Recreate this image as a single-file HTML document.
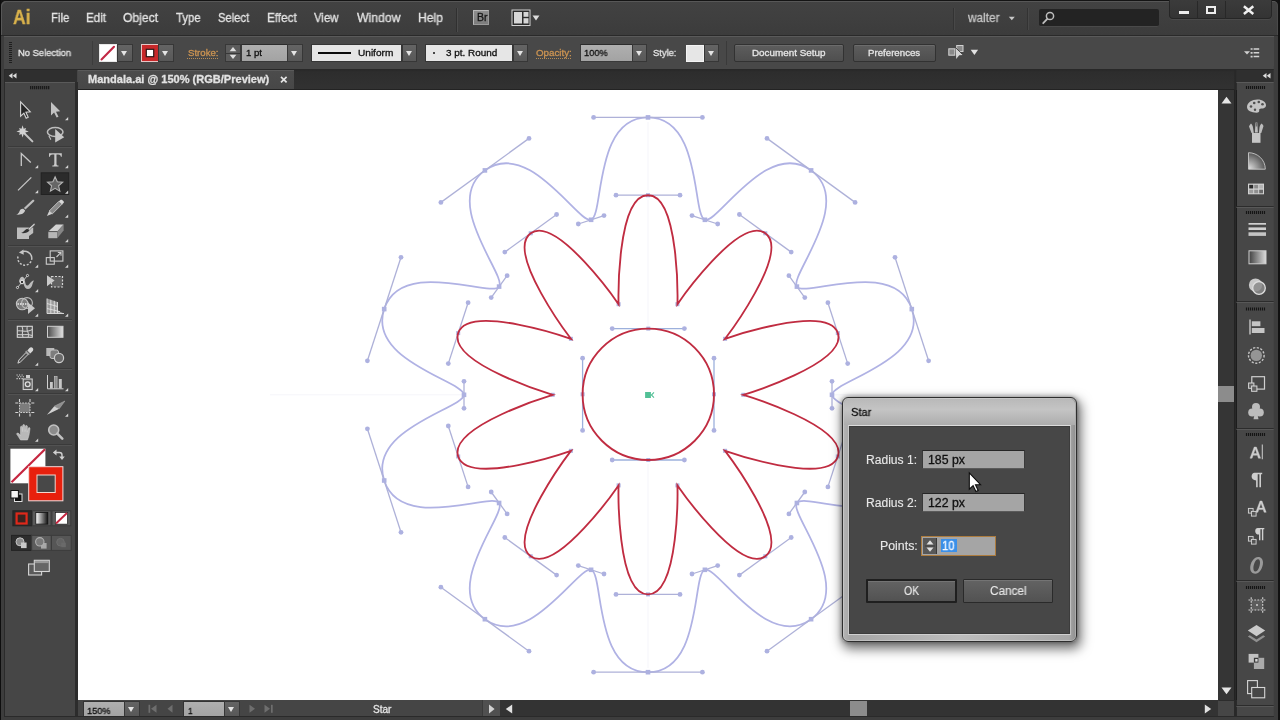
<!DOCTYPE html>
<html><head><meta charset="utf-8"><title>Illustrator</title>
<style>
*{box-sizing:border-box;margin:0;padding:0}
html,body{width:1280px;height:720px;overflow:hidden;background:#2b2b2b}
body{font-family:"Liberation Sans",sans-serif;font-size:12px;color:#e0e0e0}
#app{position:absolute;left:0;top:0;width:1280px;height:720px;overflow:hidden;background:#141414}
.abs{position:absolute}
#menubar{position:absolute;left:1px;top:1px;width:1277px;height:35px;background:linear-gradient(#424242,#3c3c3c);border-radius:5px 5px 0 0;box-shadow:inset 1px 1px 0 #575757,inset -1px 0 0 #4a4a4a;border-bottom:1px solid #2a2a2a}
#controlbar{position:absolute;left:2px;top:36px;width:1272px;height:32.5px;background:#484848;border-top:1px solid #5a5a5a}
#tabbar{position:absolute;left:2px;top:68.5px;width:1272px;height:21.5px;background:linear-gradient(#272727,#2d2d2d 15%,#323232)}
#tab{position:absolute;left:76px;top:1.5px;width:216px;height:19.5px;background:linear-gradient(#4c4c4c,#474747);box-shadow:inset 0 1px 0 #5a5a5a}
#tools{position:absolute;left:2px;top:70px;width:76px;height:647px;background:#464646}
#canvas{position:absolute;left:78px;top:90px;width:1140.3px;height:610px;background:#fff;overflow:hidden}
#status{position:absolute;left:78px;top:700px;width:1160px;height:17px;background:#2c2c2c}
#vscroll{position:absolute;left:1218.3px;top:90px;width:16px;height:610px;background:#353535}
#rpanel{position:absolute;left:1236.8px;top:70px;width:37.8px;height:647px;background:#474747}
</style>
<style>
.tx{position:absolute;white-space:pre;line-height:1;transform-origin:0 0;display:block;will-change:transform;-webkit-text-stroke:.3px}
</style>
<style>
.dd{position:absolute;background:linear-gradient(#646464,#585858);border:1px solid #373737}
.dd i{position:absolute;left:50%;top:50%;margin:-2.4px 0 0 -3.8px;width:0;height:0;border-left:3.8px solid transparent;border-right:3.8px solid transparent;border-top:5.2px solid #e4e4e4}
.fld{position:absolute;background:linear-gradient(#afafaf,#a3a3a3);border:1px solid #3a3a3a;border-top-color:#2c2c2c}
.lfld{position:absolute;background:#e6e6e6;border:1px solid #363636}
.btn{position:absolute;background:linear-gradient(#5d5d5d,#4f4f4f);border:1px solid #323232;border-radius:2px;box-shadow:inset 0 1px 0 #6c6c6c}
.dotu{height:1px;background:repeating-linear-gradient(90deg,#b88c54 0 1px,transparent 1px 2px)}
</style>
<style>
#dlg{position:absolute;left:842px;top:397px;width:235px;height:245px;border-radius:6px;border:1px solid #2e2e2e;background:linear-gradient(90deg,#b4b4b4,#a6a6a6 3%,#bdbdbd 50%,#a8a8a8 97%,#8e8e8e);box-shadow:0 0 0 1px rgba(255,255,255,.25) inset,2px 5px 12px 2px rgba(0,0,0,.55),0 0 5px rgba(0,0,0,.4)}
#dlgtitle{position:absolute;left:1px;top:1px;right:1px;height:26px;border-radius:5px 5px 0 0;background:linear-gradient(#b9b9b9,#c4c4c4 40%,#adadad)}
#dlgbody{position:absolute;left:5px;top:27px;width:223px;height:210px;background:#474747;border:1px solid #d4d4d4;border-color:#dcdcdc #c0c0c0 #d0d0d0 #c8c8c8;box-shadow:inset 0 0 0 1px #3c3c3c}
.dfld{position:absolute;background:#a5a5a5;border:1px solid #3a3a3a;border-top-color:#262626;border-bottom-color:#5a5a5a}
.dbtn{background:linear-gradient(#636363,#525252);box-shadow:inset 0 1px 0 #747474;border-radius:1px}
</style>

</head><body>
<div id="app">
<div id="canvas"><svg width="1280" height="720" viewBox="0 0 1280 720" style="position:absolute;left:-78px;top:-90px">
<path d="M270 394.800H464M832 394.800H1040M648 122V190M648 200V326M648 464V590M648 600V668" stroke="#f5f5fa" stroke-width="1"/>
<path d="M648.00 117.40 C702.40 117.40 692.02 215.63 704.86 219.81 C717.70 223.98 767.04 138.40 811.05 170.38 C855.06 202.35 788.92 275.73 796.86 286.65 C804.79 297.57 895.01 257.34 911.82 309.08 C928.63 360.82 832.00 381.30 832.00 394.80 C832.00 408.30 928.63 428.78 911.82 480.52 C895.01 532.26 804.79 492.03 796.86 502.95 C788.92 513.87 855.06 587.25 811.05 619.22 C767.04 651.20 717.70 565.62 704.86 569.79 C692.02 573.97 702.40 672.20 648.00 672.20 C593.60 672.20 603.98 573.97 591.14 569.79 C578.30 565.62 528.96 651.20 484.95 619.22 C440.94 587.25 507.08 513.87 499.14 502.95 C491.21 492.03 400.99 532.26 384.18 480.52 C367.37 428.78 464.00 408.30 464.00 394.80 C464.00 381.30 367.37 360.82 384.18 309.08 C400.99 257.34 491.21 297.57 499.14 286.65 C507.08 275.73 440.94 202.35 484.95 170.38 C528.96 138.40 578.30 223.98 591.14 219.81 C603.98 215.63 593.60 117.40 648.00 117.40 Z" fill="none" stroke="#b0b2e4" stroke-width="1.75"/>
<line x1="593.6" y1="117.4" x2="702.4" y2="117.4" stroke="#aeb1d8" stroke-width="1.3"/>
<circle cx="593.6" cy="117.4" r="2.4" fill="#adb1e0"/>
<circle cx="702.4" cy="117.4" r="2.4" fill="#adb1e0"/>
<rect x="645.7" y="115.1" width="4.6" height="4.6" fill="#adb1e0"/>
<line x1="692.0" y1="215.6" x2="717.7" y2="224.0" stroke="#aeb1d8" stroke-width="1.3"/>
<circle cx="692.0" cy="215.6" r="2.4" fill="#adb1e0"/>
<circle cx="717.7" cy="224.0" r="2.4" fill="#adb1e0"/>
<rect x="702.6" y="217.5" width="4.6" height="4.6" fill="#adb1e0"/>
<line x1="767.0" y1="138.4" x2="855.1" y2="202.4" stroke="#aeb1d8" stroke-width="1.3"/>
<circle cx="767.0" cy="138.4" r="2.4" fill="#adb1e0"/>
<circle cx="855.1" cy="202.4" r="2.4" fill="#adb1e0"/>
<rect x="808.8" y="168.1" width="4.6" height="4.6" fill="#adb1e0"/>
<line x1="788.9" y1="275.7" x2="804.8" y2="297.6" stroke="#aeb1d8" stroke-width="1.3"/>
<circle cx="788.9" cy="275.7" r="2.4" fill="#adb1e0"/>
<circle cx="804.8" cy="297.6" r="2.4" fill="#adb1e0"/>
<rect x="794.6" y="284.3" width="4.6" height="4.6" fill="#adb1e0"/>
<line x1="895.0" y1="257.3" x2="928.6" y2="360.8" stroke="#aeb1d8" stroke-width="1.3"/>
<circle cx="895.0" cy="257.3" r="2.4" fill="#adb1e0"/>
<circle cx="928.6" cy="360.8" r="2.4" fill="#adb1e0"/>
<rect x="909.5" y="306.8" width="4.6" height="4.6" fill="#adb1e0"/>
<line x1="832.0" y1="381.3" x2="832.0" y2="408.3" stroke="#aeb1d8" stroke-width="1.3"/>
<circle cx="832.0" cy="381.3" r="2.4" fill="#adb1e0"/>
<circle cx="832.0" cy="408.3" r="2.4" fill="#adb1e0"/>
<rect x="829.7" y="392.5" width="4.6" height="4.6" fill="#adb1e0"/>
<line x1="928.6" y1="428.8" x2="895.0" y2="532.3" stroke="#aeb1d8" stroke-width="1.3"/>
<circle cx="928.6" cy="428.8" r="2.4" fill="#adb1e0"/>
<circle cx="895.0" cy="532.3" r="2.4" fill="#adb1e0"/>
<rect x="909.5" y="478.2" width="4.6" height="4.6" fill="#adb1e0"/>
<line x1="804.8" y1="492.0" x2="788.9" y2="513.9" stroke="#aeb1d8" stroke-width="1.3"/>
<circle cx="804.8" cy="492.0" r="2.4" fill="#adb1e0"/>
<circle cx="788.9" cy="513.9" r="2.4" fill="#adb1e0"/>
<rect x="794.6" y="500.7" width="4.6" height="4.6" fill="#adb1e0"/>
<line x1="855.1" y1="587.2" x2="767.0" y2="651.2" stroke="#aeb1d8" stroke-width="1.3"/>
<circle cx="855.1" cy="587.2" r="2.4" fill="#adb1e0"/>
<circle cx="767.0" cy="651.2" r="2.4" fill="#adb1e0"/>
<rect x="808.8" y="616.9" width="4.6" height="4.6" fill="#adb1e0"/>
<line x1="717.7" y1="565.6" x2="692.0" y2="574.0" stroke="#aeb1d8" stroke-width="1.3"/>
<circle cx="717.7" cy="565.6" r="2.4" fill="#adb1e0"/>
<circle cx="692.0" cy="574.0" r="2.4" fill="#adb1e0"/>
<rect x="702.6" y="567.5" width="4.6" height="4.6" fill="#adb1e0"/>
<line x1="702.4" y1="672.2" x2="593.6" y2="672.2" stroke="#aeb1d8" stroke-width="1.3"/>
<circle cx="702.4" cy="672.2" r="2.4" fill="#adb1e0"/>
<circle cx="593.6" cy="672.2" r="2.4" fill="#adb1e0"/>
<rect x="645.7" y="669.9" width="4.6" height="4.6" fill="#adb1e0"/>
<line x1="604.0" y1="574.0" x2="578.3" y2="565.6" stroke="#aeb1d8" stroke-width="1.3"/>
<circle cx="604.0" cy="574.0" r="2.4" fill="#adb1e0"/>
<circle cx="578.3" cy="565.6" r="2.4" fill="#adb1e0"/>
<rect x="588.8" y="567.5" width="4.6" height="4.6" fill="#adb1e0"/>
<line x1="529.0" y1="651.2" x2="440.9" y2="587.2" stroke="#aeb1d8" stroke-width="1.3"/>
<circle cx="529.0" cy="651.2" r="2.4" fill="#adb1e0"/>
<circle cx="440.9" cy="587.2" r="2.4" fill="#adb1e0"/>
<rect x="482.6" y="616.9" width="4.6" height="4.6" fill="#adb1e0"/>
<line x1="507.1" y1="513.9" x2="491.2" y2="492.0" stroke="#aeb1d8" stroke-width="1.3"/>
<circle cx="507.1" cy="513.9" r="2.4" fill="#adb1e0"/>
<circle cx="491.2" cy="492.0" r="2.4" fill="#adb1e0"/>
<rect x="496.8" y="500.7" width="4.6" height="4.6" fill="#adb1e0"/>
<line x1="401.0" y1="532.3" x2="367.4" y2="428.8" stroke="#aeb1d8" stroke-width="1.3"/>
<circle cx="401.0" cy="532.3" r="2.4" fill="#adb1e0"/>
<circle cx="367.4" cy="428.8" r="2.4" fill="#adb1e0"/>
<rect x="381.9" y="478.2" width="4.6" height="4.6" fill="#adb1e0"/>
<line x1="464.0" y1="408.3" x2="464.0" y2="381.3" stroke="#aeb1d8" stroke-width="1.3"/>
<circle cx="464.0" cy="408.3" r="2.4" fill="#adb1e0"/>
<circle cx="464.0" cy="381.3" r="2.4" fill="#adb1e0"/>
<rect x="461.7" y="392.5" width="4.6" height="4.6" fill="#adb1e0"/>
<line x1="367.4" y1="360.8" x2="401.0" y2="257.3" stroke="#aeb1d8" stroke-width="1.3"/>
<circle cx="367.4" cy="360.8" r="2.4" fill="#adb1e0"/>
<circle cx="401.0" cy="257.3" r="2.4" fill="#adb1e0"/>
<rect x="381.9" y="306.8" width="4.6" height="4.6" fill="#adb1e0"/>
<line x1="491.2" y1="297.6" x2="507.1" y2="275.7" stroke="#aeb1d8" stroke-width="1.3"/>
<circle cx="491.2" cy="297.6" r="2.4" fill="#adb1e0"/>
<circle cx="507.1" cy="275.7" r="2.4" fill="#adb1e0"/>
<rect x="496.8" y="284.3" width="4.6" height="4.6" fill="#adb1e0"/>
<line x1="440.9" y1="202.4" x2="529.0" y2="138.4" stroke="#aeb1d8" stroke-width="1.3"/>
<circle cx="440.9" cy="202.4" r="2.4" fill="#adb1e0"/>
<circle cx="529.0" cy="138.4" r="2.4" fill="#adb1e0"/>
<rect x="482.6" y="168.1" width="4.6" height="4.6" fill="#adb1e0"/>
<line x1="578.3" y1="224.0" x2="604.0" y2="215.6" stroke="#aeb1d8" stroke-width="1.3"/>
<circle cx="578.3" cy="224.0" r="2.4" fill="#adb1e0"/>
<circle cx="604.0" cy="215.6" r="2.4" fill="#adb1e0"/>
<rect x="588.8" y="217.5" width="4.6" height="4.6" fill="#adb1e0"/>
<line x1="616.0" y1="195.2" x2="680.0" y2="195.2" stroke="#aeb1d8" stroke-width="1.3"/>
<circle cx="616.0" cy="195.2" r="2.4" fill="#adb1e0"/>
<circle cx="680.0" cy="195.2" r="2.4" fill="#adb1e0"/>
<rect x="646.0" y="193.2" width="4" height="4" fill="#adb1e0"/>
<rect x="675.4" y="302.2" width="4" height="4" fill="#adb1e0"/>
<line x1="739.4" y1="214.5" x2="791.2" y2="252.1" stroke="#aeb1d8" stroke-width="1.3"/>
<circle cx="739.4" cy="214.5" r="2.4" fill="#adb1e0"/>
<circle cx="791.2" cy="252.1" r="2.4" fill="#adb1e0"/>
<rect x="763.3" y="231.3" width="4" height="4" fill="#adb1e0"/>
<rect x="723.1" y="336.8" width="4" height="4" fill="#adb1e0"/>
<line x1="827.9" y1="302.7" x2="847.7" y2="363.6" stroke="#aeb1d8" stroke-width="1.3"/>
<circle cx="827.9" cy="302.7" r="2.4" fill="#adb1e0"/>
<circle cx="847.7" cy="363.6" r="2.4" fill="#adb1e0"/>
<rect x="835.8" y="331.1" width="4" height="4" fill="#adb1e0"/>
<rect x="741.3" y="392.8" width="4" height="4" fill="#adb1e0"/>
<line x1="847.7" y1="426.0" x2="827.9" y2="486.9" stroke="#aeb1d8" stroke-width="1.3"/>
<circle cx="847.7" cy="426.0" r="2.4" fill="#adb1e0"/>
<circle cx="827.9" cy="486.9" r="2.4" fill="#adb1e0"/>
<rect x="835.8" y="454.5" width="4" height="4" fill="#adb1e0"/>
<rect x="723.1" y="448.8" width="4" height="4" fill="#adb1e0"/>
<line x1="791.2" y1="537.5" x2="739.4" y2="575.1" stroke="#aeb1d8" stroke-width="1.3"/>
<circle cx="791.2" cy="537.5" r="2.4" fill="#adb1e0"/>
<circle cx="739.4" cy="575.1" r="2.4" fill="#adb1e0"/>
<rect x="763.3" y="554.3" width="4" height="4" fill="#adb1e0"/>
<rect x="675.4" y="483.4" width="4" height="4" fill="#adb1e0"/>
<line x1="680.0" y1="594.4" x2="616.0" y2="594.4" stroke="#aeb1d8" stroke-width="1.3"/>
<circle cx="680.0" cy="594.4" r="2.4" fill="#adb1e0"/>
<circle cx="616.0" cy="594.4" r="2.4" fill="#adb1e0"/>
<rect x="646.0" y="592.4" width="4" height="4" fill="#adb1e0"/>
<rect x="616.6" y="483.4" width="4" height="4" fill="#adb1e0"/>
<line x1="556.6" y1="575.1" x2="504.8" y2="537.5" stroke="#aeb1d8" stroke-width="1.3"/>
<circle cx="556.6" cy="575.1" r="2.4" fill="#adb1e0"/>
<circle cx="504.8" cy="537.5" r="2.4" fill="#adb1e0"/>
<rect x="528.7" y="554.3" width="4" height="4" fill="#adb1e0"/>
<rect x="568.9" y="448.8" width="4" height="4" fill="#adb1e0"/>
<line x1="468.1" y1="486.9" x2="448.3" y2="426.0" stroke="#aeb1d8" stroke-width="1.3"/>
<circle cx="468.1" cy="486.9" r="2.4" fill="#adb1e0"/>
<circle cx="448.3" cy="426.0" r="2.4" fill="#adb1e0"/>
<rect x="456.2" y="454.5" width="4" height="4" fill="#adb1e0"/>
<rect x="550.7" y="392.8" width="4" height="4" fill="#adb1e0"/>
<line x1="448.3" y1="363.6" x2="468.1" y2="302.7" stroke="#aeb1d8" stroke-width="1.3"/>
<circle cx="448.3" cy="363.6" r="2.4" fill="#adb1e0"/>
<circle cx="468.1" cy="302.7" r="2.4" fill="#adb1e0"/>
<rect x="456.2" y="331.1" width="4" height="4" fill="#adb1e0"/>
<rect x="568.9" y="336.8" width="4" height="4" fill="#adb1e0"/>
<line x1="504.8" y1="252.1" x2="556.6" y2="214.5" stroke="#aeb1d8" stroke-width="1.3"/>
<circle cx="504.8" cy="252.1" r="2.4" fill="#adb1e0"/>
<circle cx="556.6" cy="214.5" r="2.4" fill="#adb1e0"/>
<rect x="528.7" y="231.3" width="4" height="4" fill="#adb1e0"/>
<rect x="616.6" y="302.2" width="4" height="4" fill="#adb1e0"/>
<line x1="612.2" y1="328.6" x2="684.4" y2="328.6" stroke="#9cb0dc" stroke-width="1.3"/>
<circle cx="612.2" cy="328.6" r="2.4" fill="#adb1e0"/>
<circle cx="684.4" cy="328.6" r="2.4" fill="#adb1e0"/>
<rect x="646.3" y="326.6" width="4" height="4" fill="#adb1e0"/>
<line x1="612.2" y1="460.0" x2="684.4" y2="460.0" stroke="#9cb0dc" stroke-width="1.3"/>
<circle cx="612.2" cy="460.0" r="2.4" fill="#adb1e0"/>
<circle cx="684.4" cy="460.0" r="2.4" fill="#adb1e0"/>
<rect x="646.3" y="458.0" width="4" height="4" fill="#adb1e0"/>
<line x1="582.6" y1="358.2" x2="582.6" y2="430.4" stroke="#9cb0dc" stroke-width="1.3"/>
<circle cx="582.6" cy="358.2" r="2.4" fill="#adb1e0"/>
<circle cx="582.6" cy="430.4" r="2.4" fill="#adb1e0"/>
<rect x="580.6" y="392.3" width="4" height="4" fill="#adb1e0"/>
<line x1="714.0" y1="358.2" x2="714.0" y2="430.4" stroke="#9cb0dc" stroke-width="1.3"/>
<circle cx="714.0" cy="358.2" r="2.4" fill="#adb1e0"/>
<circle cx="714.0" cy="430.4" r="2.4" fill="#adb1e0"/>
<rect x="712.0" y="392.3" width="4" height="4" fill="#adb1e0"/>
<path d="M648.00 195.20 C680.00 195.20 677.45 304.16 677.45 304.16 C677.45 304.16 739.43 214.51 765.32 233.32 C791.21 252.13 725.10 338.78 725.10 338.78 C725.10 338.78 827.94 302.69 837.83 333.12 C847.72 363.55 743.30 394.80 743.30 394.80 C743.30 394.80 847.72 426.05 837.83 456.48 C827.94 486.91 725.10 450.82 725.10 450.82 C725.10 450.82 791.21 537.47 765.32 556.28 C739.43 575.09 677.45 485.44 677.45 485.44 C677.45 485.44 680.00 594.40 648.00 594.40 C616.00 594.40 618.55 485.44 618.55 485.44 C618.55 485.44 556.57 575.09 530.68 556.28 C504.79 537.47 570.90 450.82 570.90 450.82 C570.90 450.82 468.06 486.91 458.17 456.48 C448.28 426.05 552.70 394.80 552.70 394.80 C552.70 394.80 448.28 363.55 458.17 333.12 C468.06 302.69 570.90 338.78 570.90 338.78 C570.90 338.78 504.79 252.13 530.68 233.32 C556.57 214.51 618.55 304.16 618.55 304.16 C618.55 304.16 616.00 195.20 648.00 195.20 Z" fill="none" stroke="#c02c41" stroke-width="1.85" stroke-linejoin="miter"/>
<circle cx="648.3" cy="394.3" r="65.7" fill="none" stroke="#c02c41" stroke-width="1.85"/>
<rect x="645.100" y="392" width="5.800" height="6" fill="#52c096"/><path d="M654 392.300l-2.600 2.700 2.600 2.700" stroke="#52c096" stroke-width="1.100" fill="none"/>
</svg></div>
<div id="menubar">
  <div class="abs" style="left:455px;top:7px;width:1px;height:24px;background:#303030"></div>
  <div class="abs" style="left:456px;top:7px;width:1px;height:24px;background:#4c4c4c"></div>
  <!-- Br icon -->
  <div class="abs" style="left:471.500px;top:8.700px;width:16.500px;height:15.500px;background:linear-gradient(#8e8e8e,#7c7c7c);border:1px solid #b9b9b9;border-right-color:#9a9a9a;border-bottom-color:#9a9a9a"></div>
  <!-- layout icon -->
  <svg class="abs" style="left:510px;top:8px" width="32" height="18" viewBox="0 0 32 18">
    <rect x="1" y="1" width="18" height="15.5" fill="#2b2b2b" stroke="#d2d2d2" stroke-width="1"/>
    <rect x="3" y="3" width="8" height="11.5" fill="#d6d6d6"/>
    <rect x="12.5" y="3" width="5" height="4.8" fill="#d6d6d6"/>
    <rect x="12.5" y="9.2" width="5" height="5.3" fill="#d6d6d6"/>
    <path d="M21.5 6.5h7l-3.5 5z" fill="#dcdcdc"/>
  </svg>
  <!-- user sep -->
  <div class="abs" style="left:952px;top:7px;width:1px;height:22px;background:#333"></div>
  <div class="abs" style="left:953px;top:7px;width:1px;height:22px;background:#484848"></div>
  <div class="abs" style="left:1026px;top:7px;width:1px;height:22px;background:#333"></div>
  <div class="abs" style="left:1027px;top:7px;width:1px;height:22px;background:#484848"></div>
  <svg class="abs" style="left:1007px;top:15px" width="8" height="5"><path d="M0.8 0.8h6l-3 3.4z" fill="#c8c8c8"/></svg>
  <!-- search -->
  <div class="abs" style="left:1038px;top:8px;width:120px;height:18px;background:#232323;border-radius:2px;border-bottom:1px solid #4a4a4a"></div>
  <svg class="abs" style="left:1040px;top:9px" width="16" height="16" viewBox="0 0 16 16"><circle cx="9" cy="6" r="3.6" fill="none" stroke="#bdbdbd" stroke-width="1.5"/><path d="M6.3 8.8L2.2 13.2" stroke="#bdbdbd" stroke-width="1.8" stroke-linecap="round"/></svg>
  <!-- window buttons -->
  <div class="abs" style="left:1168.400px;top:-1px;width:102.200px;height:19px;background:linear-gradient(#3b3b3b,#343434);border:1px solid #262626;border-top:none;border-radius:0 0 4px 4px;box-shadow:0 1px 0 #4a4a4a"></div>
  <div class="abs" style="left:1196px;top:0;width:1px;height:17.500px;background:#282828"></div>
  <div class="abs" style="left:1223.500px;top:0;width:1px;height:17.500px;background:#282828"></div>
  <div class="abs" style="left:1177.700px;top:9.800px;width:10.300px;height:3.200px;background:#ededed"></div>
  <div class="abs" style="left:1204.700px;top:4.600px;width:10.500px;height:8.300px;border:2px solid #ededed"></div>
  <svg class="abs" style="left:1241px;top:4px" width="13" height="10" viewBox="0 0 13 10"><path d="M1.900 1.300L11.300 9M11.300 1.300L1.900 9" stroke="#f0f0f0" stroke-width="2.500"/></svg>
</div>

<div id="controlbar">
  <!-- gripper -->
  <div class="abs" style="left:7px;top:5px;width:3px;height:21px;background:repeating-linear-gradient(#1f1f1f 0 1px,transparent 1px 2px)"></div>
  <div class="abs" style="left:90px;top:4px;width:1px;height:24px;background:#3c3c3c"></div>
  <!-- fill swatch -->
  <svg class="abs" style="left:97px;top:7px" width="18" height="18" viewBox="0 0 18 18"><rect x="0.5" y="0.5" width="17" height="17" fill="#fff" stroke="#e8e8e8"/><path d="M2.5 15.5L15 2.8" stroke="#c22845" stroke-width="2.1" stroke-linecap="round"/></svg>
  <div class="dd" style="left:115px;top:7px;width:16px;height:18px"><i></i></div>
  <!-- stroke swatch -->
  <svg class="abs" style="left:138.5px;top:6.5px" width="18" height="18" viewBox="0 0 18 18"><rect x="0.5" y="0.5" width="17" height="17" fill="#c8282a" stroke="#e6c6c6"/><rect x="5.3" y="5.3" width="7.4" height="7.4" fill="#fff" stroke="#2a1a1a" stroke-width="1.2"/></svg>
  <div class="dd" style="left:156px;top:7px;width:16px;height:18px"><i></i></div>
  <!-- stroke underline -->
  <div class="abs dotu" style="left:185px;top:21px;width:31px"></div>
  <!-- spinner -->
  <div class="abs" style="left:223px;top:7px;width:16px;height:18px;background:#5c5c5c;border:1px solid #383838"></div>
  <div class="abs" style="left:224px;top:15.5px;width:14px;height:1px;background:#383838"></div>
  <svg class="abs" style="left:226px;top:9px" width="10" height="14" viewBox="0 0 10 14"><path d="M1.6 5.2h6.8L5 1z" fill="#dedede"/><path d="M1.6 8.8h6.8L5 13z" fill="#dedede"/></svg>
  <div class="fld" style="left:238.7px;top:7px;width:47px;height:18px"></div>
  <div class="dd" style="left:285px;top:7px;width:16px;height:18px"><i></i></div>
  <!-- uniform -->
  <div class="lfld" style="left:309px;top:7px;width:91px;height:18px"></div>
  <div class="abs" style="left:315.5px;top:15px;width:33px;height:1.6px;background:#0c0c0c"></div>
  <div class="dd" style="left:400px;top:7px;width:15px;height:18px"><i></i></div>
  <!-- 3pt round -->
  <div class="lfld" style="left:423px;top:7px;width:88px;height:18px"></div>
  <div class="abs" style="left:430.5px;top:14.7px;width:2.6px;height:2.6px;border-radius:2px;background:#111"></div>
  <div class="dd" style="left:511px;top:7px;width:15px;height:18px"><i></i></div>
  <div class="abs dotu" style="left:534px;top:21px;width:36px"></div>
  <!-- opacity -->
  <div class="fld" style="left:577.5px;top:7px;width:53px;height:18px"></div>
  <div class="dd" style="left:630px;top:7px;width:15px;height:18px"><i></i></div>
  <!-- style -->
  <div class="abs" style="left:684px;top:7.5px;width:18px;height:17px;background:#e6e6e6;border:1px solid #f4f4f4"></div>
  <div class="dd" style="left:702px;top:7px;width:15px;height:18px"><i></i></div>
  <div class="abs" style="left:724px;top:4px;width:1px;height:24px;background:#3a3a3a"></div>
  <div class="btn" style="left:732px;top:7px;width:110px;height:18px"></div>
  <div class="btn" style="left:851px;top:7px;width:83px;height:18px"></div>
  <!-- select similar icon -->
  <svg class="abs" style="left:944px;top:6px" width="36" height="22" viewBox="946 43 36 22">
    <rect x="948.800" y="48.800" width="6" height="6.400" fill="#8a8a8a" stroke="#d2d2d2" stroke-width="1"/>
    <rect x="956.700" y="45.500" width="6.300" height="6" fill="#8a8a8a" stroke="#d2d2d2" stroke-width="1"/>
    <path d="M955.700 47.800L963 55.100 959.200 55.300 956.200 59z" fill="#d4d4d4"/>
    <path d="M955.700 47.800L962.800 54.600" stroke="#2a2a2a" stroke-width=".8"/>
    <path d="M970.700 49.700h7.400L974.400 54.900z" fill="#e2e2e2"/>
  </svg>
  <!-- panel menu -->
  <svg class="abs" style="left:1241px;top:10px" width="18" height="12" viewBox="0 0 18 12">
    <path d="M1 4.2h6L4 7.6z" fill="#d2d2d2"/>
    <path d="M7.6 2h2M7.6 5.8h2M7.6 9.6h2" stroke="#d2d2d2" stroke-width="1.7"/>
    <path d="M10.6 2h5.6M10.6 5.8h5.6M10.6 9.6h5.6" stroke="#d2d2d2" stroke-width="1.5"/>
  </svg>
</div>

<div id="tabbar"><div id="tab"></div>
<div class="abs" style="left:76px;top:20.7px;width:1157px;height:.8px;background:#232323"></div>
<svg class="abs" style="left:277px;top:6px" width="10" height="10" viewBox="0 0 10 10"><path d="M2 1.900l5.600 5.400M7.600 1.900l-5.600 5.400" stroke="#e4e4e4" stroke-width="1.700"/></svg>
</div>

<div id="tools"></div>
<svg id="toolsvg" class="abs" style="left:0;top:66px" width="80" height="654" viewBox="0 66 80 654">
<defs>
<linearGradient id="gh" x1="0" x2="1" y1="0" y2="0"><stop offset="0" stop-color="#4a4a4a"/><stop offset="1" stop-color="#e2e2e2"/></linearGradient>
<linearGradient id="gh2" x1="0" x2="1" y1="0" y2="0"><stop offset="0" stop-color="#fff"/><stop offset="1" stop-color="#111"/></linearGradient>
<path id="tri" d="M0 3.2L3.2 0V3.2z" fill="#d4d4d4"/>
</defs>
<!-- header -->
<rect x="4.4" y="70" width="72.6" height="12" fill="#2f2f2f"/>
<rect x="4.4" y="82" width="72.6" height="1" fill="#5a5a5a"/>
<path d="M12.5 73v5.400L8.700 75.700zM16.500 73v5.400L12.700 75.700z" fill="#dcdcdc"/>
<!-- gripper -->
<path d="M30.7 86v3.2M32.7 86v3.2M34.7 86v3.2M36.7 86v3.2M38.7 86v3.2M40.7 86v3.2M42.7 86v3.2M44.7 86v3.2M46.7 86v3.2M48.7 86v3.2" stroke="#151515" stroke-width="1.150"/>
<!-- separators -->
<g stroke="#3a3a3a" stroke-width="1"><path d="M8 146.5h64M8 245.5h64M8 319.5h64M8 368.5h64M8 393.5h64M8 444.5h64"/></g>
<g stroke="#525252" stroke-width="1"><path d="M8 147.5h64M8 246.5h64M8 320.5h64M8 369.5h64M8 394.5h64M8 445.5h64"/></g>

<!-- row1: selection tools -->
<path d="M20.600 101.800v14.400l3.300-3 2.300 5 2-.9-2.300-5 4.400-.400z" fill="#262626" stroke="#d4d4d4" stroke-width="1.100" stroke-linejoin="miter"/>
<path d="M51 101.900v13.500l3.100-2.800 2.500 5 1.900-.9-2.500-5 4.200-.500z" fill="#c2c2c2"/>
<use href="#tri" x="65" y="117"/>
<!-- row2: magic wand, lasso -->
<path d="M25 134l7.400 7.400" stroke="#c4c4c4" stroke-width="2" stroke-linecap="round"/>
<path d="M22.6 125.2L23.7 128.7L26.1 127.9L25.3 130.3L28.8 131.4L25.3 132.5L26.1 134.9L23.7 134.1L22.6 137.6L21.5 134.1L19.1 134.9L19.9 132.5L16.4 131.4L19.9 130.3L19.1 127.9L21.5 128.7z" fill="#d2d2d2"/>
<ellipse cx="55.200" cy="132" rx="7.800" ry="4.500" fill="none" stroke="#bdbdbd" stroke-width="1.500"/>
<path d="M49.500 135.500c-1.600 1.800 1.800 2.200 1 4.200" fill="none" stroke="#bdbdbd" stroke-width="1.300"/>
<path d="M55.200 129v13.400l9-5.200z" fill="#c8c8c8"/>
<!-- row3: anchor, type -->
<path d="M21.3 166V153.500l9.500 9" fill="none" stroke="#c8c8c8" stroke-width="1.3"/>
<use href="#tri" x="35" y="165"/>
<path d="M49 153.200h12.800v3.600h-.9c-.3-1.600-1-2.300-2.700-2.300h-1.700v9.200c0 1.400.5 1.700 2 1.800v.9h-6.200v-.9c1.500-.1 2-.4 2-1.800v-9.200h-1.700c-1.700 0-2.400.7-2.700 2.300H49z" fill="#cacaca"/>
<use href="#tri" x="65" y="165"/>
<!-- row4: line, star(selected) -->
<path d="M18 190.400L31.300 177.400" stroke="#c8c8c8" stroke-width="1.3"/>
<use href="#tri" x="35" y="190"/>
<rect x="41.200" y="172.800" width="27.500" height="21.700" fill="#2b2b2b" stroke="#222" stroke-width="1"/>
<path d="M55.100 176.800l2.200 4.900 5.400.5-4.100 3.600 1.200 5.300-4.700-2.800-4.700 2.800 1.200-5.300-4.100-3.600 5.400-.5z" fill="#666" stroke="#b4b4b4" stroke-width="1.1" stroke-linejoin="miter"/>
<use href="#tri" x="65" y="190.600"/>
<!-- row5: brush, pencil -->
<path d="M33.800 199.800c.8.500.7 1.200.2 1.800l-8.500 8-1.600-1.600 8.500-8c.4-.4 1-.5 1.400-.2z" fill="#bdbdbd"/>
<path d="M23.300 208.700l1.800 1.800c-.5 2.500-4 4.800-9 4 2.500-.8 2.800-2 3.500-3.600.7-1.500 2-2.400 3.700-2.200z" fill="#cdcdcd"/>
<path d="M59 201.200l3.200 2.800-9.800 9.800-3.200-2.800z" fill="#8a8a8a" stroke="#c8c8c8" stroke-width=".9"/>
<path d="M59 201.200l1.300-1.200c.6-.5 1.300-.5 1.900 0l1.300 1.200c.5.500.5 1.300 0 1.800l-1.300 1.200z" fill="#d8d8d8"/>
<path d="M49.200 211l3.200 2.800-5.500 2.300z" fill="#d0d0d0"/>
<use href="#tri" x="65" y="214.500"/>
<!-- row6: blob brush, eraser -->
<path d="M17 227.500h16.200v5.500l-4.200 3v3H17z" fill="#bdbdbd"/>
<path d="M34.800 223.600c.5.400.4 1 0 1.400l-5.600 5.200-1.300-1.300 5.700-5.200c.4-.3.800-.4 1.200-.1z" fill="#d2d2d2" stroke="#3a3a3a" stroke-width=".5"/>
<path d="M27.700 229l1.500 1.400c-1 2-4.500 3.200-8.200 2.600 2-.7 2.800-1.300 3.600-2.400.8-1.100 1.800-1.700 3.100-1.600z" fill="#333"/>
<path d="M55.900 224.600h7.700l-6.300 6.900h-9z" fill="#d2d2d2"/>
<path d="M48.300 231.800h9v6.400h-9z" fill="#b6b6b6"/>
<path d="M57.300 231.500l6.300-6.900v5.900l-6.300 7.700z" fill="#868686"/>
<path d="M48.300 231.600h9" stroke="#3c3c3c" stroke-width=".7"/>
<use href="#tri" x="65" y="239"/>
<!-- row7: rotate, scale -->
<path d="M21.500 252.200a7 7 0 0 1 10.300 5.700" fill="none" stroke="#c6c6c6" stroke-width="1.500"/>
<path d="M31.800 257.900a7 7 0 1 1-13.300-2.800" fill="none" stroke="#c6c6c6" stroke-width="1.500" stroke-dasharray="2 1.600"/>
<path d="M23.500 249.600l-4.600 2.800 4.800 2.300z" fill="#c6c6c6"/>
<use href="#tri" x="35" y="264.500"/>
<rect x="46.300" y="257.600" width="8" height="6.600" fill="none" stroke="#cdcdcd" stroke-width="1.100"/>
<rect x="50.200" y="250.900" width="12.700" height="10.200" fill="none" stroke="#cdcdcd" stroke-width="1.100"/>
<path d="M56.500 257l4.300-4.300M57.800 252.500h3.200v3.200" fill="none" stroke="#cdcdcd" stroke-width="1.100"/>
<use href="#tri" x="65" y="264.500"/>
<!-- row8: width, free transform -->
<path d="M19 281c1-4 3.500-5.500 5-3s1 8 3.500 7.500 2.500-4.500 6.500-5c-2 3-1.500 8.500-6 8.500-4.500 0-3.500-6-5.500-6s-2 1.500-3.500-2z" fill="#bcbcbc"/>
<path d="M17.500 287.500l10-12" stroke="#e0e0e0" stroke-width=".8"/>
<circle cx="22" cy="282" r="1.800" fill="#3a3a3a" stroke="#ececec" stroke-width="1"/>
<circle cx="17.500" cy="287.500" r="1.100" fill="#3a3a3a" stroke="#ececec" stroke-width=".8"/>
<circle cx="27.500" cy="275.500" r="1.100" fill="#3a3a3a" stroke="#ececec" stroke-width=".8"/>
<use href="#tri" x="35" y="289"/>
<rect x="51.500" y="276.500" width="11" height="10.500" fill="#606060" stroke="#d6d6d6" stroke-width="1.200" stroke-dasharray="2 1.500"/>
<path d="M47 275.200v11l7.600-5.600z" fill="#cacaca"/>
<!-- row9: shape builder, perspective grid -->
<circle cx="22.200" cy="304" r="5.800" fill="#7e7e7e" stroke="#c4c4c4" stroke-width="1.100"/>
<circle cx="27" cy="303" r="5.400" fill="none" stroke="#bdbdbd" stroke-width="1.100"/>
<path d="M17.500 304h11" stroke="#f0f0f0" stroke-width="1.400" stroke-dasharray="1.400 1.100"/>
<path d="M28 302.500v11.500l7-5.800z" fill="#c8c8c8"/>
<use href="#tri" x="35" y="313.500"/>
<path d="M47 298.500v15h17l-6.500-3v-8.500z" fill="#9a9a9a"/>
<path d="M47 298.500v15M50.800 299.800v13.700M54.300 300.800v12.700M57.500 302v11.500M47 313.500h17M47 308.500l13 3.200M47 303.500l10.500 3" stroke="#e0e0e0" stroke-width=".9" fill="none"/>
<use href="#tri" x="65" y="313.500"/>
<!-- row10: mesh, gradient -->
<rect x="17.300" y="326.300" width="15" height="11" fill="#555" stroke="#d6d6d6" stroke-width="1.100"/>
<path d="M17.300 331c4-1 9 2 15-1.500M22 326.300c2 4-1 7 1 11M27.500 326.300c-2 4 2.500 7 .5 11M17.300 334.500c5 1 10-1 15 1" fill="none" stroke="#d6d6d6" stroke-width="1"/>
<rect x="47.500" y="326.300" width="15.500" height="11" fill="url(#gh)" stroke="#cfcfcf" stroke-width="1"/>
<!-- row11: eyedropper, blend -->
<path d="M29.500 348c1-1 2.500-.8 3.200 0 .8.800.8 2.200-.2 3.200l-2.200 2.200-3-3z" fill="#d8d8d8"/>
<path d="M26.300 350.500l3.600 3.600-1.200 1.200-3.600-3.600z" fill="#9a9a9a"/>
<path d="M26 352.500l2 2-7.300 7.300-2.800 1.400 1-3.200z" fill="#505050" stroke="#d0d0d0" stroke-width="1"/>
<use href="#tri" x="35" y="362.500"/>
<rect x="46.300" y="348" width="8" height="8" fill="#b9b9b9"/>
<rect x="50" y="350" width="8.500" height="8.500" rx="2" fill="#7d7d7d" stroke="#c2c2c2" stroke-width="1"/>
<circle cx="59" cy="358" r="4.600" fill="#6a6a6a" stroke="#cdcdcd" stroke-width="1.200"/>
<!-- row12: symbol sprayer, graph -->
<rect x="23.200" y="379" width="9" height="10.500" fill="#585858" stroke="#cfcfcf" stroke-width="1.100"/>
<rect x="26" y="375" width="4" height="3" fill="#cfcfcf"/>
<circle cx="27.700" cy="384.300" r="2.400" fill="none" stroke="#dedede" stroke-width="1.300"/>
<path d="M16.500 375h1.200M19 375h1.200M21.500 375h1.200M17.700 376.800h1.200M20.200 376.800h1.200M22.700 376.800h1.200M16.500 378.600h1.200M19 378.600h1.200M21.500 378.600h1.200" stroke="#d4d4d4" stroke-width="1.100"/>
<use href="#tri" x="35" y="388"/>
<path d="M47.500 375v13.800h16" fill="none" stroke="#d0d0d0" stroke-width="1"/>
<rect x="50" y="382" width="2.800" height="6.500" fill="#c8c8c8"/>
<rect x="54.300" y="376.500" width="2.800" height="12" fill="#8c8c8c" stroke="#c8c8c8" stroke-width=".6"/>
<rect x="58.800" y="379" width="3" height="9.500" fill="#c8c8c8"/>
<use href="#tri" x="65" y="388"/>
<!-- row13: artboard, slice -->
<rect x="19.500" y="403" width="10.500" height="9.500" fill="#7c7c7c" stroke="#d0d0d0" stroke-width="1" stroke-dasharray="1.600 1.200"/>
<path d="M19.500 399v3M30 399v3M19.500 413.500v3M30 413.500v3M15.300 403h3M15.300 412.500h3M31.300 403h3M31.300 412.500h3" stroke="#d6d6d6" stroke-width="1.100"/>
<path d="M47 414.800L54.300 406.200 59.200 408.800z" fill="#d2d2d2"/>
<path d="M54.300 406.200L64.900 401 59.200 408.800z" fill="#8e8e8e" stroke="#b4b4b4" stroke-width=".5"/>
<use href="#tri" x="65" y="413.500"/>
<!-- row14: hand, zoom -->
<path d="M20.500 440c-1.500-2.500-3-4.500-4-6.200.8-1.200 2.200-.8 3.300.8l.7 1v-8.500c0-1.200 1.800-1.200 1.900 0l.3 4.500v-6c0-1.300 2-1.300 2.100 0l.1 6 .5-5.200c.1-1.200 2-1.100 2 .1l-.2 5.600 1-3.800c.3-1.100 2-.8 1.800.4-.5 3.500-.7 6-1.500 8.300-.3 1-.7 2-1 3z" fill="#b8b8b8" stroke="#d6d6d6" stroke-width=".5"/>
<use href="#tri" x="35" y="438.500"/>
<circle cx="53.700" cy="430" r="5" fill="#8c8c8c" stroke="#c2c2c2" stroke-width="1.600"/>
<path d="M57.300 433.700l5 5" stroke="#c2c2c2" stroke-width="2.600" stroke-linecap="round"/>

<!-- fill/stroke swatches -->
<rect x="10.400" y="448.700" width="35" height="34.600" fill="#fff"/>
<path d="M11.500 482.300L45 449.200" stroke="#c62640" stroke-width="2.200"/>
<path d="M55 452.500h4.500c1.500 0 2.500 1 2.500 2.500v3" fill="none" stroke="#d0d0d0" stroke-width="1.400"/>
<path d="M56.500 449.600v5.800l-3.600-2.900zM59.200 456.500h5.600l-2.800 3.500z" fill="#d0d0d0"/>
<rect x="28.700" y="466.700" width="34.200" height="34.100" fill="#e8200d" stroke="#f6dada" stroke-width="1"/>
<rect x="37" y="475" width="18.200" height="17.500" fill="#484848" stroke="#f2d8d0" stroke-width="1"/>
<!-- default colors -->
<rect x="14.500" y="494" width="7.500" height="7.500" fill="#101010" stroke="#e0e0e0" stroke-width="1"/>
<rect x="10.900" y="490.500" width="7.500" height="7.500" fill="#f4f4f4" stroke="#101010" stroke-width="1"/>
<!-- colour mode row -->
<rect x="12.900" y="510.800" width="18.600" height="15" fill="#2b2b2b" stroke="#232323" stroke-width="1"/>
<rect x="32.300" y="510.800" width="18.700" height="15" fill="#5a5a5a" stroke="#3a3a3a" stroke-width="1"/>
<rect x="52" y="510.800" width="18.800" height="15" fill="#5a5a5a" stroke="#3a3a3a" stroke-width="1"/>
<rect x="16.600" y="513.500" width="10" height="10" fill="#3a2420" stroke="#e0281a" stroke-width="2.200"/>
<rect x="35.800" y="512.600" width="12" height="11.500" fill="url(#gh2)" stroke="#111" stroke-width=".8"/>
<rect x="55.400" y="512.600" width="12" height="11.500" fill="#fff" stroke="#111" stroke-width=".6"/>
<path d="M56 523.500L67 513" stroke="#c62640" stroke-width="1.900"/>
<!-- draw modes -->
<rect x="11.500" y="535.400" width="20" height="15" fill="#2d2d2d" stroke="#232323" stroke-width="1"/>
<rect x="31.700" y="535.400" width="19.500" height="15" fill="#5c5c5c" stroke="#3c3c3c" stroke-width="1"/>
<rect x="51.500" y="535.400" width="19.700" height="15" fill="#565656" stroke="#3c3c3c" stroke-width="1"/>
<circle cx="20" cy="541.800" r="4" fill="#8a8a8a" stroke="#c6c6c6" stroke-width="1"/>
<rect x="21" y="542.500" width="5.600" height="5.600" fill="#c8c8c8"/>
<rect x="41" y="543" width="5.600" height="5.600" fill="#a8a8a8"/>
<circle cx="39.800" cy="541.800" r="4.200" fill="#7a7a7a" stroke="#b0b0b0" stroke-width="1.100"/>
<circle cx="60.500" cy="542.200" r="3.800" fill="#636363" stroke="#6e6e6e" stroke-width="1"/>
<rect x="61.200" y="542.600" width="4.600" height="4.600" fill="#6a6a6a"/>
<!-- screen mode -->
<rect x="28.600" y="564" width="13" height="11" fill="#5a5a5a" stroke="#d6d6d6" stroke-width="1.100"/>
<rect x="34.300" y="560.300" width="15" height="11.200" fill="#666" stroke="#d6d6d6" stroke-width="1.100"/>
<rect x="34.900" y="560.900" width="13.800" height="2.200" fill="#9a9a9a"/>
</svg>

<div id="status">
  <!-- coordinates relative to x=78,y=700 -->
  <div class="abs" style="left:0;top:0;width:423px;height:17px;background:#454545"></div>
  <div class="fld" style="left:4.5px;top:1px;width:42px;height:16px;border-color:#333"></div>
  <div class="dd" style="left:45.7px;top:1px;width:16.5px;height:16px"><i></i></div>
  <svg class="abs" style="left:68px;top:3px" width="130" height="12" viewBox="146 703 130 12">
    <g fill="#6e6e6e">
      <rect x="148.5" y="704.8" width="1.7" height="8"/><path d="M156.5 704.800v8l-5.5-4z"/>
      <path d="M172.5 704.800v8l-5-4z"/>
      <path d="M249.5 704.800v8l5.5-4z"/>
      <path d="M264.5 704.800v8l5.5-4z"/><rect x="271" y="704.8" width="1.7" height="8"/>
    </g>
  </svg>
  <div class="fld" style="left:104.8px;top:1px;width:42px;height:16px;border-color:#333"></div>
  <div class="dd" style="left:146px;top:1px;width:16px;height:16px"><i></i></div>
  <!-- status popup button -->
  <div class="abs" style="left:403.6px;top:0;width:18.5px;height:17px;background:#505050;border-left:1px solid #3a3a3a"></div>
  <svg class="abs" style="left:410px;top:4px" width="8" height="10"><path d="M1 .6v8.800l5.6-4.400z" fill="#d2d2d2"/></svg>
  <!-- hscroll -->
  <div class="abs" style="left:422px;top:0;width:719px;height:17px;background:#333"></div>
  <svg class="abs" style="left:427px;top:4px" width="8" height="10"><path d="M7.2 .4v9.200L.8 5z" fill="#e2e2e2"/></svg>
  <div class="abs" style="left:772px;top:1px;width:16.5px;height:15px;background:#8c8c8c"></div>
  <svg class="abs" style="left:1126px;top:4px" width="8" height="10"><path d="M.8 .6v8.800l6.4-4.400z" fill="#e2e2e2"/></svg>
</div>
<div id="vscroll">
  <svg class="abs" style="left:3px;top:5.500px" width="11" height="8"><path d="M.5 7.500h10L5.5 .8z" fill="#e6e6e6"/></svg>
  <div class="abs" style="left:0;top:296px;width:15.5px;height:15.5px;background:#8c8c8c"></div>
  <svg class="abs" style="left:3px;top:597px" width="11" height="8"><path d="M.5 .5h10L5.5 7.200z" fill="#e6e6e6"/></svg>
</div>
<div class="abs" style="left:1218.300px;top:700.500px;width:16px;height:15.500px;background:#464646"></div>

<div id="rpanel"></div>
<svg class="abs" style="left:1232px;top:66px" width="48" height="654" viewBox="1232 66 48 654">
<defs>
<linearGradient id="rg1" x1="0" x2="1"><stop offset="0" stop-color="#404040"/><stop offset="1" stop-color="#dcdcdc"/></linearGradient>
<radialGradient id="rg2" cx="0" cy="1" r="1"><stop offset="0" stop-color="#e4e4e4"/><stop offset="1" stop-color="#555"/></radialGradient>
<path id="grip" d="M0 0v3M2 0v3M4 0v3M6 0v3M8 0v3M10 0v3M12 0v3M14 0v3M16 0v3M18 0v3" stroke="#151515" stroke-width="1.150"/>
</defs>
<rect x="1234.3" y="69" width="2.1" height="651" fill="#282828"/>
<rect x="1236.4" y="70" width="37.4" height="12" fill="#2f2f2f"/>
<rect x="1236.4" y="82" width="37.4" height="1" fill="#5a5a5a"/>
<path d="M1266.500 73v5.400L1262.700 75.700zM1270.500 73v5.400L1266.700 75.700z" fill="#dcdcdc"/>
<use href="#grip" x="1246.5" y="86"/>
<!-- group separators -->
<g stroke="#2c2c2c"><path d="M1236.4 206.5h37.4M1236.4 301.5h37.4M1236.4 428.5h37.4M1236.4 580.5h37.4M1236.4 705.500h37.400"/></g>
<g stroke="#585858"><path d="M1236.4 207.5h37.4M1236.4 302.5h37.4M1236.4 429.5h37.4M1236.4 581.5h37.4M1236.4 706.500h37.400"/></g>
<use href="#grip" x="1246.5" y="211"/>
<use href="#grip" x="1246.5" y="307.500"/>
<use href="#grip" x="1246.5" y="433"/>
<use href="#grip" x="1246.5" y="586"/>
<!-- palette -->
<path d="M1247 107c0-4.5 5-7.6 10.5-7.6 5 0 8.5 2.5 8.5 5.8 0 2.6-2.6 3.3-4.6 3.3-1.6 0-2.500.7-2.2 1.800.3 1.2-.5 2.4-2.7 2.4-5 0-9.5-2-9.5-5.7z" fill="#c4c4c4"/>
<g fill="#505050"><circle cx="1251" cy="106.5" r="1.3"/><circle cx="1254.2" cy="103" r="1.3"/><circle cx="1258.8" cy="102" r="1.3"/><circle cx="1262.5" cy="104.3" r="1.3"/><circle cx="1255" cy="109.8" r="1.2"/></g>
<!-- brushes in cup -->
<path d="M1252 133h8.5v9.8H1252z" fill="#c6c6c6"/>
<path d="M1255.5 122.5h1.8l.6 10h-3zM1249 126.5c.5-1.5 1.5-2.5 2-3 1 .8 1.8 2.5 2 4l.8 5.5h-2.3zM1263.5 126c-.5-1.2-1.2-2-2-2.5-.800.8-1.7 2.2-2 3.8l-.6 5.7h2.4z" fill="#bcbcbc"/>
<path d="M1255.8 122.5h1.4v4h-1.4z" fill="#707070"/>
<!-- color guide quarter -->
<path d="M1248.5 169.2v-16.5c9 0 16.8 7 16.8 16.5z" fill="url(#rg2)" stroke="#c8c8c8" stroke-width=".9"/>
<!-- swatches grid -->
<rect x="1248" y="183.6" width="16" height="10.7" fill="#d2d2d2"/>
<g><rect x="1249.2" y="184.8" width="4" height="3.7" fill="#2c2c2c"/><rect x="1254.2" y="184.8" width="4" height="3.7" fill="#8a8a8a"/><rect x="1259.2" y="184.8" width="3.8" height="3.7" fill="#b4b4b4"/>
<rect x="1249.2" y="189.7" width="4" height="3.6" fill="#9c9c9c"/><rect x="1254.2" y="189.7" width="4" height="3.6" fill="#8e8e8e"/><rect x="1259.2" y="189.7" width="3.8" height="3.6" fill="#6a6a6a"/></g>
<!-- stroke: 3 lines -->
<rect x="1248.5" y="223" width="17.5" height="1.7" fill="#d0d0d0"/>
<rect x="1248.5" y="227.4" width="17.5" height="2.6" fill="#d0d0d0"/>
<rect x="1248.5" y="232.3" width="17.5" height="3.6" fill="#c4c4c4"/>
<!-- gradient -->
<rect x="1249" y="250.8" width="17" height="13" fill="url(#rg1)" stroke="#cfcfcf" stroke-width="1"/>
<!-- transparency -->
<circle cx="1255.5" cy="285" r="6.6" fill="#c8c8c8"/>
<circle cx="1259" cy="288" r="6.3" fill="#8a8a8a" fill-opacity=".85" stroke="#dedede" stroke-width="1.3"/>
<!-- align -->
<path d="M1250 319.500v15" stroke="#d2d2d2" stroke-width="1.300"/>
<rect x="1251.800" y="321.300" width="8.600" height="4.900" fill="#c6c6c6"/>
<rect x="1251.800" y="328" width="12.700" height="5" fill="#c6c6c6"/>
<!-- appearance -->
<circle cx="1256.300" cy="355.400" r="5.700" fill="#959595"/>
<circle cx="1256.300" cy="355.400" r="7.800" fill="none" stroke="#c6c6c6" stroke-width="1.400" stroke-dasharray="2.200 1.500"/>
<!-- graphic styles -->
<rect x="1251.800" y="376.700" width="12.700" height="12.400" fill="none" stroke="#cfcfcf" stroke-width="1.200"/>
<rect x="1248.600" y="383" width="5.300" height="5.300" fill="#606060" stroke="#d6d6d6" stroke-width="1"/>
<rect x="1251.600" y="386" width="5.300" height="5.300" fill="#606060" stroke="#d6d6d6" stroke-width="1"/>
<!-- symbols (club) -->
<circle cx="1256" cy="407" r="4" fill="#bcbcbc"/><circle cx="1252.200" cy="412.600" r="4" fill="#bcbcbc"/><circle cx="1259.800" cy="412.600" r="4" fill="#bcbcbc"/>
<path d="M1255.200 411h1.600l1.700 8.200h-5z" fill="#bcbcbc"/>
<!-- Character A| -->
<path d="M1250 458.200l4.200-11.200h2.200l4.200 11.200h-2.200l-1-2.900h-4.300l-1 2.900zM1253.700 453.600h3.200l-1.600-4.600z" fill="#cdcdcd" stroke="#cdcdcd" stroke-width=".4"/>
<path d="M1262.300 444.600v14.600" stroke="#c4c4c4" stroke-width="1.100"/>
<!-- Paragraph -->
<path d="M1254.500 472.700h7.700v1.500h-1.200v13h-1.600v-13h-1.700v13h-1.600v-6.800c-2.700 0-4.500-1.600-4.500-3.900s1.400-3.800 2.900-3.800z" fill="#cdcdcd"/>
<!-- char styles -->
<path d="M1255.800 512.300l4.200-11.300h2l4.200 11.300h-2.100l-.9-2.700h-4.400l-.9 2.700zM1259.300 507.900h3.400l-1.700-4.700z" fill="#d0d0d0" stroke="#d0d0d0" stroke-width=".4"/>
<rect x="1248.400" y="508.400" width="4.700" height="4.700" fill="#555" stroke="#d6d6d6" stroke-width=".9"/>
<rect x="1251.400" y="511.400" width="4.700" height="4.700" fill="#555" stroke="#d6d6d6" stroke-width=".9"/>
<!-- para styles -->
<path d="M1257.800 528h6.500v1.300h-1v11h-1.400v-11h-1.500v11h-1.400v-5.700c-2.300 0-3.800-1.400-3.800-3.400s1.100-3.200 2.600-3.200z" fill="#d0d0d0"/>
<rect x="1248.400" y="536.400" width="4.700" height="4.700" fill="#555" stroke="#d6d6d6" stroke-width=".9"/>
<rect x="1251.400" y="539.400" width="4.700" height="4.700" fill="#555" stroke="#d6d6d6" stroke-width=".9"/>
<!-- OpenType O -->
<path d="M1258.200 557c3.200 0 4.800 2.600 4.800 5.500 0 5-3.200 11.200-7.800 11.200-3.200 0-5-2.400-5-5.600 0-5.100 3.400-11.100 8-11.100zm-.2 2.200c-2.400 0-4.600 5-4.600 9 0 1.800.5 3.300 2 3.300 2.500 0 4.600-5 4.600-9 0-1.800-.5-3.300-2-3.300z" fill="#9a9a9a"/>
<!-- artboards -->
<rect x="1251.2" y="600" width="11.5" height="10" fill="#5c5c5c" stroke="#d2d2d2" stroke-width="1.1" stroke-dasharray="1.8 1.3"/>
<path d="M1251.2 597.3v2M1262.7 597.3v2M1251.2 610.7v2M1262.7 610.7v2M1248.5 600h2M1248.5 610h2M1263.4 600h2M1263.4 610h2" stroke="#d2d2d2" stroke-width="1.1"/>
<circle cx="1257" cy="605" r="1" fill="#d2d2d2"/>
<!-- layers -->
<path d="M1256.500 625l8.700 5.600-8.700 5.600-8.700-5.600z" fill="#cacaca"/>
<path d="M1249.800 635.300l-2 1.300 8.700 5.700 8.700-5.700-2-1.300-6.700 4.300z" fill="#909090"/>
<!-- pathfinder -->
<rect x="1248.600" y="653.900" width="9.800" height="8.700" fill="#c2c2c2"/>
<rect x="1253.900" y="657.800" width="10.300" height="11.200" fill="#aaaaaa"/>
<rect x="1253.900" y="657.800" width="4.500" height="4.800" fill="#3a3a3a"/>
<rect x="1255.200" y="659" width="2.400" height="2.600" fill="#d8d8d8"/>
<!-- transform / links -->
<rect x="1247.600" y="680.600" width="9.800" height="13" fill="none" stroke="#d6d6d6" stroke-width="1.100"/>
<rect x="1251.700" y="687.500" width="13" height="10.300" fill="#474747" stroke="#d6d6d6" stroke-width="1.100"/>
<!-- right frame -->
<rect x="1273.8" y="36" width="4.2" height="684" fill="#3c3c3c"/>
</svg>

<!-- window frame strips -->
<div class="abs" style="left:0;top:0;width:1px;height:720px;background:#0e0e0e"></div>
<div class="abs" style="left:1px;top:36px;width:3.3px;height:684px;background:#3d3d3d"></div>
<div class="abs" style="left:4.2px;top:69px;width:.8px;height:648px;background:#2b2b2b"></div>
<div class="abs" style="left:1px;top:716.6px;width:1277px;height:3.4px;background:#3d3d3d"></div>
<div class="abs" style="left:4.3px;top:716px;width:1270px;height:1px;background:#2a2a2a"></div>
<div class="abs" style="left:1278px;top:0;width:2px;height:720px;background:#111"></div>
<div class="abs" style="left:75.4px;top:82px;width:2.6px;height:634px;background:#2c2c2c"></div>
<div class="abs" style="left:1274px;top:36px;width:4px;height:684px;background:#3d3d3d"></div>

<span class="tx" style="left:477.3px;top:12.0px;font-size:10.5px;color:#161616;font-weight:400;transform:scaleX(1.000);">Br</span>
<span class="tx" style="left:12.8px;top:6.0px;font-size:21px;color:#d9b24c;font-weight:700;transform:scaleX(0.833);">Ai</span>
<span class="tx" style="left:51.2px;top:12.0px;font-size:12.5px;color:#e4e4e4;font-weight:400;transform:scaleX(0.908);">File</span>
<span class="tx" style="left:86.2px;top:12.0px;font-size:12.5px;color:#e4e4e4;font-weight:400;transform:scaleX(0.928);">Edit</span>
<span class="tx" style="left:123.0px;top:12.0px;font-size:12.5px;color:#e4e4e4;font-weight:400;transform:scaleX(0.968);">Object</span>
<span class="tx" style="left:175.5px;top:12.0px;font-size:12.5px;color:#e4e4e4;font-weight:400;transform:scaleX(0.904);">Type</span>
<span class="tx" style="left:218.0px;top:12.0px;font-size:12.5px;color:#e4e4e4;font-weight:400;transform:scaleX(0.898);">Select</span>
<span class="tx" style="left:267.2px;top:12.0px;font-size:12.5px;color:#e4e4e4;font-weight:400;transform:scaleX(0.939);">Effect</span>
<span class="tx" style="left:314.0px;top:12.0px;font-size:12.5px;color:#e4e4e4;font-weight:400;transform:scaleX(0.912);">View</span>
<span class="tx" style="left:357.0px;top:12.0px;font-size:12.5px;color:#e4e4e4;font-weight:400;transform:scaleX(0.978);">Window</span>
<span class="tx" style="left:418.0px;top:12.0px;font-size:12.5px;color:#e4e4e4;font-weight:400;transform:scaleX(0.972);">Help</span>
<span class="tx" style="left:967.5px;top:12.0px;font-size:12.5px;color:#c6c6c6;font-weight:400;transform:scaleX(0.945);">walter</span>
<span class="tx" style="left:18.0px;top:48.0px;font-size:9.5px;color:#e6e6e6;font-weight:400;transform:scaleX(0.987);">No Selection</span>
<span class="tx" style="left:187.5px;top:48.0px;font-size:9.5px;color:#cc9452;font-weight:400;transform:scaleX(1.013);">Stroke:</span>
<span class="tx" style="left:245.7px;top:48.0px;font-size:9.5px;color:#101010;font-weight:400;transform:scaleX(1.009);">1 pt</span>
<span class="tx" style="left:358.2px;top:48.0px;font-size:9.5px;color:#101010;font-weight:400;transform:scaleX(1.061);">Uniform</span>
<span class="tx" style="left:446.2px;top:48.0px;font-size:9.5px;color:#101010;font-weight:400;transform:scaleX(1.044);">3 pt. Round</span>
<span class="tx" style="left:536.2px;top:48.0px;font-size:9.5px;color:#cc9452;font-weight:400;transform:scaleX(1.027);">Opacity:</span>
<span class="tx" style="left:583.7px;top:48.0px;font-size:9.5px;color:#101010;font-weight:400;transform:scaleX(0.979);">100%</span>
<span class="tx" style="left:653.1px;top:48.0px;font-size:9.5px;color:#e6e6e6;font-weight:400;transform:scaleX(0.985);">Style:</span>
<span class="tx" style="left:752.2px;top:48.0px;font-size:9.5px;color:#e6e6e6;font-weight:400;transform:scaleX(1.037);">Document Setup</span>
<span class="tx" style="left:868.1px;top:48.0px;font-size:9.5px;color:#e6e6e6;font-weight:400;transform:scaleX(1.019);">Preferences</span>
<span class="tx" style="left:87.5px;top:74.0px;font-size:11px;color:#e2e2e2;font-weight:700;transform:scaleX(1.003);">Mandala.ai @ 150% (RGB/Preview)</span>
<span class="tx" style="left:86.7px;top:706.0px;font-size:9.5px;color:#101010;font-weight:400;transform:scaleX(0.971);">150%</span>
<span class="tx" style="left:187.5px;top:706.0px;font-size:9.5px;color:#101010;font-weight:400;transform:scaleX(0.868);">1</span>
<span class="tx" style="left:372.8px;top:705.0px;font-size:10px;color:#e6e6e6;font-weight:400;transform:scaleX(1.003);">Star</span>
<div id="dlg">
  <div id="dlgtitle"></div>
  <div id="dlgbody"></div>
  <!-- fields (coords relative to padding box at 843,398) -->
  <div class="dfld" style="left:79px;top:52px;width:102.5px;height:18.5px"></div>
  <div class="dfld" style="left:79px;top:95px;width:102.5px;height:18.5px"></div>
  <div class="dfld" style="left:78px;top:138px;width:74.5px;height:19.5px;border:1px solid #ad7c3e"></div>
  <div class="abs" style="left:79.5px;top:139.5px;width:14.5px;height:16.5px;background:#585858;border-right:1px solid #3a3a3a"></div>
  <svg class="abs" style="left:81.5px;top:140.7px" width="10" height="14" viewBox="0 0 10 14"><path d="M1.5 5.4h7L5 1.2z" fill="#e0e0e0"/><path d="M1.5 8.6h7L5 12.8z" fill="#e0e0e0"/><path d="M0 7h10" stroke="#3c3c3c" stroke-width="1"/></svg>
  <div class="abs" style="left:97.5px;top:140.7px;width:16.4px;height:12.9px;background:#3b8fe8"></div>
  <div class="abs dbtn" style="left:22.5px;top:181px;width:91px;height:24px;border:2px solid #1f1f1f"></div>
  <div class="abs dbtn" style="left:120.4px;top:181px;width:89.4px;height:24px;border:1px solid #2a2a2a"></div>
</div>

<span class="tx" style="left:850.6px;top:407.0px;font-size:11.5px;color:#101010;font-weight:400;transform:scaleX(0.967);">Star</span>
<span class="tx" style="left:866.2px;top:454.0px;font-size:12px;color:#e8e8e8;font-weight:400;transform:scaleX(1.006);-webkit-text-stroke:.12px">Radius 1:</span>
<span class="tx" style="left:928.1px;top:454.0px;font-size:12px;color:#101010;font-weight:400;transform:scaleX(1.024);">185 px</span>
<span class="tx" style="left:866.2px;top:497.0px;font-size:12px;color:#e8e8e8;font-weight:400;transform:scaleX(1.006);-webkit-text-stroke:.12px">Radius 2:</span>
<span class="tx" style="left:928.1px;top:497.0px;font-size:12px;color:#101010;font-weight:400;transform:scaleX(1.024);">122 px</span>
<span class="tx" style="left:880.1px;top:540.0px;font-size:12px;color:#e8e8e8;font-weight:400;transform:scaleX(1.030);-webkit-text-stroke:.12px">Points:</span>
<span class="tx" style="left:942.4px;top:540.0px;font-size:12px;color:#f4f8ff;font-weight:400;transform:scaleX(0.936);">10</span>
<span class="tx" style="left:903.5px;top:585.0px;font-size:12px;color:#e8e8e8;font-weight:400;transform:scaleX(0.876);-webkit-text-stroke:.12px">OK</span>
<span class="tx" style="left:990.4px;top:585.0px;font-size:12px;color:#e8e8e8;font-weight:400;transform:scaleX(0.980);-webkit-text-stroke:.12px">Cancel</span>
<svg class="abs" style="left:967px;top:470px;z-index:50" width="16" height="24" viewBox="-2 -2 16 24"><path d="M0.300 0.800V17.200L4.100 13.600 6.900 19.600 9.200 18.500 6.500 12.700H11.500Z" fill="#fff" stroke="#0c0c0c" stroke-width="1.100" stroke-linejoin="miter"/></svg>

</div>
</body></html>
